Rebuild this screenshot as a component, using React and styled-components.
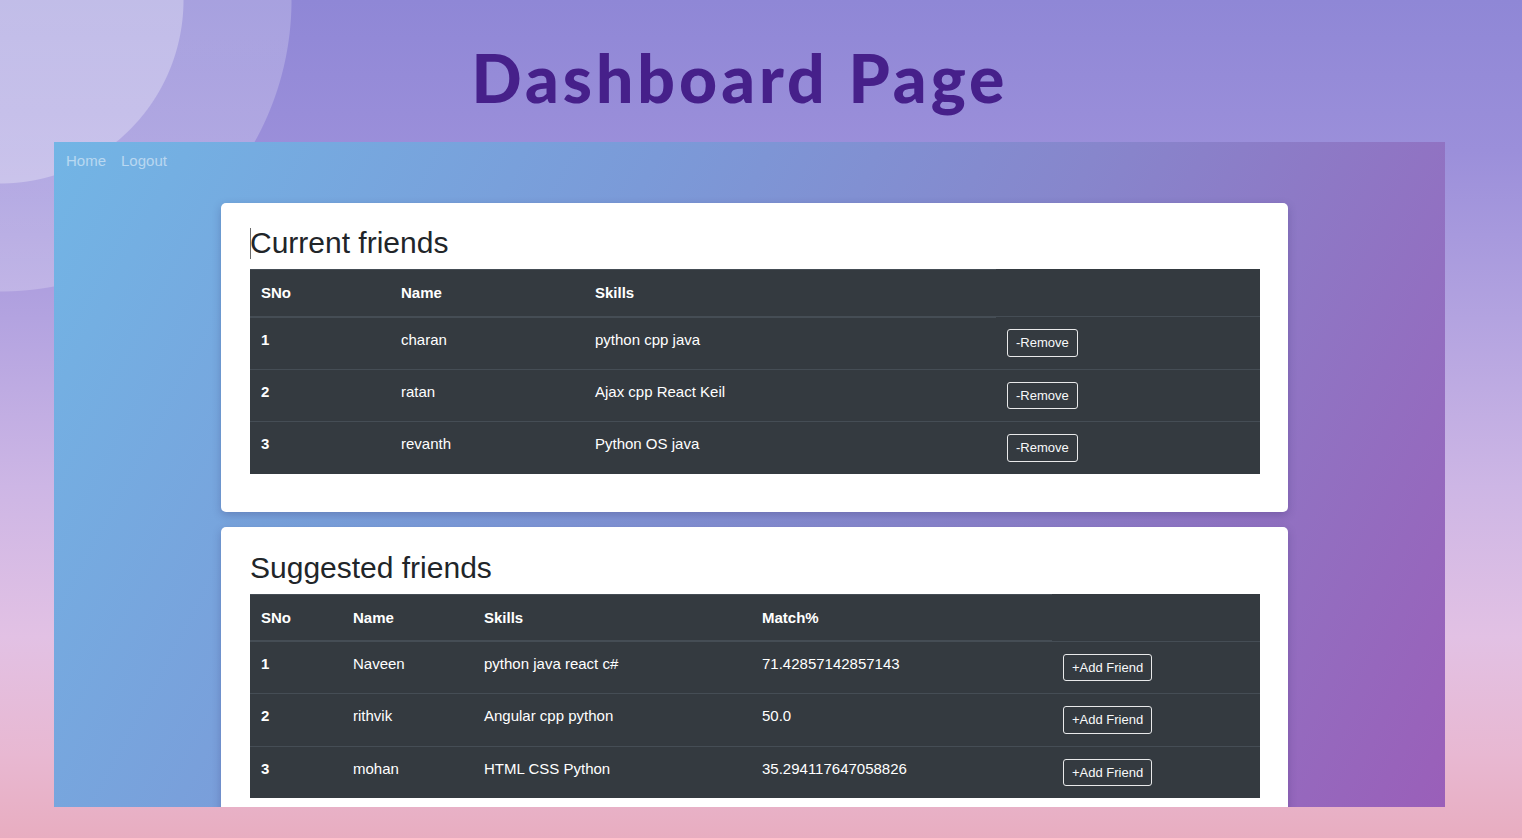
import React from "react";
import styled, { createGlobalStyle } from "styled-components";

const Global = createGlobalStyle`
  html, body { margin: 0; padding: 0; }
  body {
    min-height: 838px;
    font-family: "Liberation Sans", Arial, sans-serif;
    background:
      radial-gradient(circle at 0 0, rgba(255,255,255,0.45) 0, rgba(255,255,255,0.45) 183px, rgba(255,255,255,0.22) 184px, rgba(255,255,255,0.22) 291px, rgba(255,255,255,0) 292px),
      linear-gradient(180deg, #8f87d6 0%, #9b8fda 18%, #b3a3e0 38%, #cdb6e5 58%, #e2c1e4 76%, #e8b8d2 90%, #e8adc0 100%);
    background-repeat: no-repeat;
    background-size: 100% 838px;
  }
`;

const Page = styled.div`
  display: flex;
  flex-direction: column;
  padding: 0 77px 0 54px;
`;

const TitleBar = styled.header`
  height: 142px;
  box-sizing: border-box;
  display: flex;
  justify-content: center;
  padding: 45px 0 0 0;
  margin-right: 19px;
`;

const Title = styled.h1`
  margin: 0;
  font-family: Lato, "Noto Sans", sans-serif;
  font-weight: 900;
  font-size: 66px;
  line-height: 1;
  letter-spacing: 4px;
  color: #46208a;
`;

const Panel = styled.main`
  height: 665px;
  overflow: hidden;
  background: linear-gradient(118deg, #72b5e5 0%, #7b9ad8 35%, #8786cc 60%, #9a5fb9 100%);
  display: flex;
  flex-direction: column;
`;

const Nav = styled.nav`
  display: flex;
  gap: 15px;
  padding: 8px 12px;
`;

const NavLink = styled.a`
  font-size: 15px;
  line-height: 22px;
  color: rgba(255, 255, 255, 0.5);
  text-decoration: none;
`;

const Content = styled.div`
  display: flex;
  flex-direction: column;
  gap: 15px;
  padding: 23px 157px 0 167px;
`;

const Card = styled.section`
  background: #fff;
  border-radius: 5px;
  box-shadow: 0 3px 8px rgba(40, 30, 90, 0.25);
  padding: ${(p) => p.$top}px 28px 22px 29px;
`;

const Heading = styled.h2`
  margin: 0 0 8px 0;
  font-family: "Liberation Sans", Arial, sans-serif;
  font-weight: 400;
  font-size: 30px;
  line-height: 36px;
  color: #212529;
  display: flex;
  align-items: center;
`;

const Caret = styled.span`
  display: inline-block;
  width: 0;
  height: 31px;
  border-left: 1px solid #6b6b6b;
  margin-right: -1px;
`;

const Table = styled.table`
  width: 100%;
  table-layout: fixed;
  border-collapse: collapse;
  background: #343a40;
  color: #fff;
  font-size: 15px;
  line-height: 22.5px;
  margin-bottom: 16px;
`;

const Col = styled.col`
  width: ${(p) => p.$w}px;
`;

const Th = styled.th`
  text-align: left;
  font-weight: 700;
  padding: 12px 11px 11px;
  border-top: 1px solid #454d55;
  border-bottom: 2px solid #454d55;
  vertical-align: top;
`;

const Td = styled.td`
  padding: 11px 11px 12px;
  border-top: 1px solid #454d55;
  vertical-align: top;
`;

const Button = styled.button`
  display: block;
  margin-top: 1px;
  font-family: "Liberation Sans", Arial, sans-serif;
  font-size: 13px;
  line-height: 17.5px;
  padding: 4px 8px;
  background: transparent;
  color: #f8f9fa;
  border: 1px solid #e8e9ea;
  border-radius: 3px;
  cursor: pointer;
`;

const current = [
  ["1", "charan", "python cpp java"],
  ["2", "ratan", "Ajax cpp React Keil"],
  ["3", "revanth", "Python OS java"],
];

const suggested = [
  ["1", "Naveen", "python java react c#", "71.42857142857143"],
  ["2", "rithvik", "Angular cpp python", "50.0"],
  ["3", "mohan", "HTML CSS Python", "35.294117647058826"],
];

export default function App() {
  return (
    <>
      <Global />
      <Page>
        <TitleBar>
          <Title>Dashboard Page</Title>
        </TitleBar>
        <Panel>
          <Nav>
            <NavLink href="#">Home</NavLink>
            <NavLink href="#">Logout</NavLink>
          </Nav>
          <Content>
            <Card $top={22}>
              <Heading>
                <Caret />
                Current friends
              </Heading>
              <Table>
                <colgroup>
                  <Col $w={140} />
                  <Col $w={194} />
                  <Col $w={412} />
                  <Col $w={264} />
                </colgroup>
                <thead>
                  <tr>
                    <Th>SNo</Th>
                    <Th>Name</Th>
                    <Th>Skills</Th>
                  </tr>
                </thead>
                <tbody>
                  {current.map((r) => (
                    <tr key={r[0]}>
                      <Td><b>{r[0]}</b></Td>
                      <Td>{r[1]}</Td>
                      <Td>{r[2]}</Td>
                      <Td>
                        <Button>-Remove</Button>
                      </Td>
                    </tr>
                  ))}
                </tbody>
              </Table>
            </Card>
            <Card $top={23}>
              <Heading>Suggested friends</Heading>
              <Table>
                <colgroup>
                  <Col $w={92} />
                  <Col $w={131} />
                  <Col $w={278} />
                  <Col $w={301} />
                  <Col $w={208} />
                </colgroup>
                <thead>
                  <tr>
                    <Th>SNo</Th>
                    <Th>Name</Th>
                    <Th>Skills</Th>
                    <Th>Match%</Th>
                  </tr>
                </thead>
                <tbody>
                  {suggested.map((r) => (
                    <tr key={r[0]}>
                      <Td><b>{r[0]}</b></Td>
                      <Td>{r[1]}</Td>
                      <Td>{r[2]}</Td>
                      <Td>{r[3]}</Td>
                      <Td>
                        <Button>+Add Friend</Button>
                      </Td>
                    </tr>
                  ))}
                </tbody>
              </Table>
            </Card>
          </Content>
        </Panel>
      </Page>
    </>
  );
}
